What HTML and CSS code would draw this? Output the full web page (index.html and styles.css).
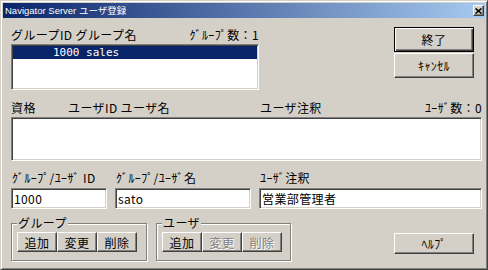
FILE: index.html
```html
<!DOCTYPE html>
<html>
<head>
  <meta charset="UTF-8">
  <title>Navigator Server ユーザ登録</title>
  <link rel="stylesheet" href="styles.css">
</head>
<body>
  <div class="window">
    <div class="titlebar">
      <span class="title">Navigator Server ユーザ登録</span>
      <span class="close-btn">
        <svg width="7" height="6" viewBox="0 0 7 6"><path d="M0.5 0.5L6.5 5.5M6.5 0.5L0.5 5.5" stroke="#000" stroke-width="1.6"/></svg>
      </span>
    </div>

    <div class="content">
      <div class="top">
        <div class="group-pane">
          <div class="list-head">
            <span>グループID グループ名</span>
            <span>ｸﾞﾙｰﾌﾟ数：1</span>
          </div>
          <div class="listbox group-list">
            <div class="list-row selected">1000 sales</div>
          </div>
        </div>
        <div class="side-buttons">
          <button class="btn default">終了</button>
          <button class="btn">ｷｬﾝｾﾙ</button>
        </div>
      </div>

      <div class="user-head">
        <span>資格</span>
        <span>ユーザID ユーザ名</span>
        <span>ユーザ注釈</span>
        <span>ﾕｰｻﾞ数：0</span>
      </div>
      <div class="listbox user-list"></div>

      <div class="fields">
        <label for="id-input">ｸﾞﾙｰﾌﾟ/ﾕｰｻﾞ ID</label>
        <label for="name-input">ｸﾞﾙｰﾌﾟ/ﾕｰｻﾞ名</label>
        <label for="note-input">ﾕｰｻﾞ注釈</label>
        <input type="text" id="id-input" value="1000">
        <input type="text" id="name-input" value="sato">
        <input type="text" id="note-input" value="営業部管理者">
      </div>

      <div class="bottom">
        <fieldset class="frame">
          <legend>グループ</legend>
          <button class="btn small">追加</button>
          <button class="btn small">変更</button>
          <button class="btn small">削除</button>
        </fieldset>
        <fieldset class="frame user-frame">
          <legend>ユーザ</legend>
          <button class="btn small">追加</button>
          <button class="btn small" disabled>変更</button>
          <button class="btn small" disabled>削除</button>
        </fieldset>
        <button class="btn help">ﾍﾙﾌﾟ</button>
      </div>
    </div>
  </div>
</body>
</html>
```

FILE: styles.css
```css
body {
  margin: 0;
  font-family: "Noto Sans CJK JP", sans-serif;
  font-size: 12px;
  letter-spacing: 0.4px;
  color: #000;
  background-color: #d4d0c8;
}
.window {
  width: 488px;
  height: 270px;
  box-sizing: border-box;
  padding: 2px;
  background-color: #d4d0c8;
  border: 1px solid;
  border-color: #d4d0c8 #404040 #404040 #d4d0c8;
  box-shadow: inset 1px 1px #fff, inset -1px -1px #808080;
}
.titlebar {
  display: flex;
  align-items: center;
  justify-content: space-between;
  height: 15px;
  padding: 0 1px 0 2px;
  background: linear-gradient(to right, #0a246a, #a6caf0);
  color: #fff;
  font-family: "Liberation Sans", "Noto Sans CJK JP", sans-serif;
  font-size: 9.5px;
  letter-spacing: 0;
  line-height: 15px;
}
.close-btn {
  display: flex;
  align-items: center;
  justify-content: center;
  width: 11px;
  height: 11px;
  box-sizing: border-box;
  background-color: #d4d0c8;
  border: 1px solid;
  border-color: #fff #404040 #404040 #fff;
  box-shadow: inset -1px -1px #808080;
}
.content {
  padding: 0 3px 0 8px;
}
.top {
  display: flex;
  margin-top: 8px;
}
.group-pane {
  width: 248px;
}
.list-head {
  display: flex;
  justify-content: space-between;
  height: 18px;
  padding-top: 1px;
  box-sizing: border-box;
  line-height: 16px;
}
.listbox {
  box-sizing: border-box;
  background-color: #fff;
  border: 1px solid;
  border-color: #808080 #fff #fff #808080;
  box-shadow: inset 1px 1px #404040, inset -1px -1px #d4d0c8;
  padding: 1px;
}
.group-list {
  height: 46px;
}
.list-row {
  height: 13px;
  line-height: 13px;
  padding-left: 40px;
  font-family: "DejaVu Sans Mono", monospace;
  font-size: 11px;
  letter-spacing: 0;
}
.list-row.selected {
  background-color: #0a246a;
  color: #fff;
}
.side-buttons {
  display: flex;
  flex-direction: column;
  gap: 1px;
  margin: 1px 8px 0 auto;
}
.btn {
  box-sizing: border-box;
  margin: 0;
  padding: 0;
  font-family: "Noto Sans CJK JP", sans-serif;
  font-size: 12px;
  letter-spacing: 0.4px;
  color: #000;
  background-color: #d4d0c8;
  border: 1px solid;
  border-color: #fff #404040 #404040 #fff;
  box-shadow: inset -1px -1px #808080;
}
.side-buttons .btn {
  width: 80px;
  height: 25px;
}
.btn.default {
  border-color: #000;
  box-shadow: inset 1px 1px #fff, inset -1px -1px #404040, inset -2px -2px #808080;
}
.btn:disabled {
  color: #808080;
  text-shadow: 1px 1px #fff;
}
.user-head {
  display: grid;
  grid-template-columns: 57px 192px 1fr auto;
  height: 17px;
  margin-top: 10px;
  line-height: 16px;
}
.user-list {
  height: 44px;
}
.fields {
  display: grid;
  grid-template-columns: 96px 136px 1fr;
  column-gap: 8px;
  row-gap: 2px;
  margin-top: 9px;
}
.fields label {
  height: 16px;
  line-height: 16px;
  padding-left: 1px;
}
.fields input {
  box-sizing: border-box;
  width: 100%;
  height: 21px;
  margin: 0;
  padding: 0 2px;
  font-family: "Noto Sans CJK JP", sans-serif;
  font-size: 12px;
  letter-spacing: 0.4px;
  background-color: #fff;
  border: 1px solid;
  border-color: #808080 #fff #fff #808080;
  box-shadow: inset 1px 1px #404040, inset -1px -1px #d4d0c8;
  outline: none;
}
.bottom {
  display: flex;
  align-items: flex-start;
  margin-top: 7px;
}
.frame {
  display: flex;
  box-sizing: border-box;
  width: 136px;
  margin: 0;
  padding: 2px 5px 8px;
  border: 1px solid #808080;
  box-shadow: inset 1px 1px #fff, 1px 1px #fff;
}
.frame legend {
  padding: 0 1px;
  line-height: 14px;
  background-color: #d4d0c8;
}
.user-frame {
  width: 135px;
  margin-left: 9px;
}
.btn.small {
  width: 40px;
  height: 20px;
}
.btn.help {
  width: 80px;
  height: 21px;
  margin: 17px 8px 0 auto;
}
```
